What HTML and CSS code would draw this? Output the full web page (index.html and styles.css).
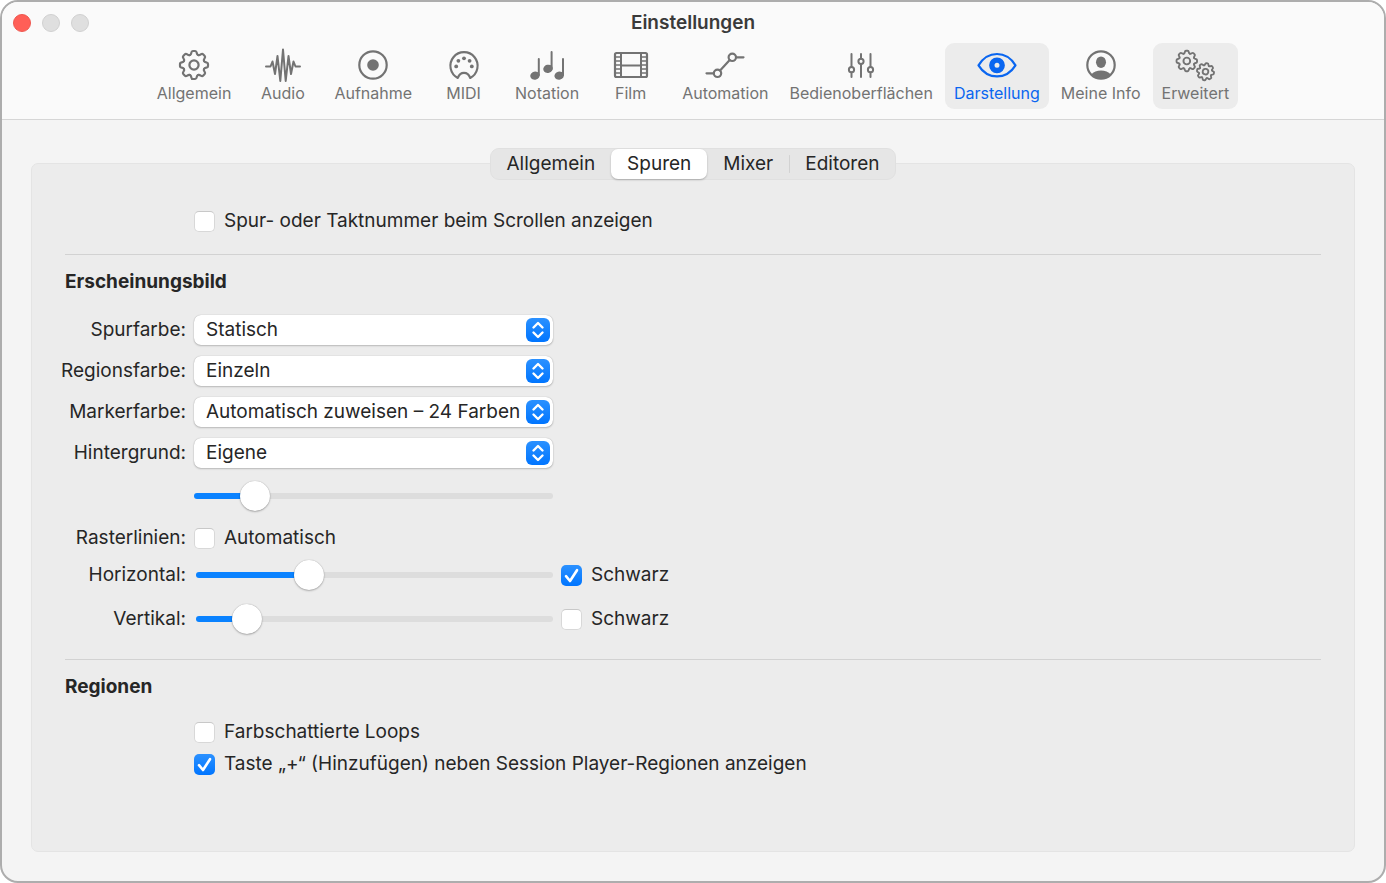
FILE: index.html
```html
<!DOCTYPE html>
<html lang="de">
<head>
<meta charset="utf-8">
<title>Einstellungen</title>
<link rel="stylesheet" href="styles.css">
</head>
<body>
<div class="window">
  <header class="header">
    <div class="titlebar">
      <div class="lights">
        <button class="light light-close" aria-label="Schließen"></button>
        <button class="light" aria-label="Minimieren"></button>
        <button class="light" aria-label="Zoomen"></button>
      </div>
      <h1 class="title">Einstellungen</h1>
    </div>
    <nav class="toolbar">
      <button class="tool">
        <svg class="icon" viewBox="-21 -18 42 36">
          <defs>
            <g id="gear">
              <path id="tooth" d="M-4.13-9.98C-3.3-10.3-2.9-10.9-2.7-12.2Q-2.4-14-1.2-14H1.2Q2.4-14 2.7-12.2C2.9-10.9 3.3-10.3 4.13-9.98"/>
              <use href="#tooth" transform="rotate(45)"/>
              <use href="#tooth" transform="rotate(90)"/>
              <use href="#tooth" transform="rotate(135)"/>
              <use href="#tooth" transform="rotate(180)"/>
              <use href="#tooth" transform="rotate(225)"/>
              <use href="#tooth" transform="rotate(270)"/>
              <use href="#tooth" transform="rotate(315)"/>
              <circle r="4.6"/>
            </g>
          </defs>
          <use href="#gear"/>
        </svg>
        <span>Allgemein</span>
      </button>
      <button class="tool">
        <svg class="icon" viewBox="-21 -18 42 36"><path class="thin" d="M-17 1.5H-12.5L-10.5-3.5L-8 9L-5.5-9L-2.7 16L0-15.5L2.7 16L5.5-9L8 9L10.5-3.5L12.5 1.5H17"/></svg>
        <span>Audio</span>
      </button>
      <button class="tool">
        <svg class="icon" viewBox="-21 -18 42 36"><circle r="13.7"/><circle class="solid" r="5.8"/></svg>
        <span>Aufnahme</span>
      </button>
      <button class="tool">
        <svg class="icon" viewBox="-21 -18 42 36"><path d="M-6.2 12.9A13.6 13.6 0 1 1 6.2 12.9C5 9.5 3 7.8 0 7.8S-5 9.5-6.2 12.9Z"/><g class="solid"><circle cx="-7.8" cy="1.4" r="1.9"/><circle cx="-5.6" cy="-4.2" r="1.9"/><circle cy="-6.7" r="1.9"/><circle cx="5.6" cy="-4.2" r="1.9"/><circle cx="7.8" cy="1.4" r="1.9"/></g></svg>
        <span>MIDI</span>
      </button>
      <button class="tool">
        <svg class="icon" viewBox="-21 -18 42 36"><path class="thin" d="M-8.2 10V-6M4.6 4V-13M16 10V-6"/><g class="solid"><ellipse cx="-12" cy="10.6" rx="4.8" ry="4.1" transform="rotate(-15 -12 10.6)"/><ellipse cx="1" cy="3.8" rx="4.8" ry="4.1" transform="rotate(-15 1 3.8)"/><ellipse cx="12.2" cy="10.6" rx="4.8" ry="4.1" transform="rotate(-15 12.2 10.6)"/></g></svg>
        <span>Notation</span>
      </button>
      <button class="tool">
        <svg class="icon" viewBox="-21 -18 42 36"><rect x="-16" y="-12" width="32" height="24" rx="1.5"/><path class="thin" d="M-10-12V12M10-12V12M-10 0.5H10"/><path class="hair" d="M-16-8H-10M-16-4H-10M-16 0H-10M-16 4H-10M-16 8H-10M10-8H16M10-4H16M10 0H16M10 4H16M10 8H16"/></svg>
        <span>Film</span>
      </button>
      <button class="tool">
        <svg class="icon" viewBox="-21 -18 42 36"><circle cx="-7.5" cy="8.3" r="3.7"/><circle cx="7.3" cy="-7.7" r="3.7"/><path d="M-18.5 8.3H-11.5M-4.9 5.5L4.7-4.9M11.2-7.7H18.5"/></svg>
        <span>Automation</span>
      </button>
      <button class="tool">
        <svg class="icon" viewBox="-21 -18 42 36"><g class="thin"><circle cx="-9.5" cy="4.7" r="2.6"/><circle cy="-3.7" r="2.6"/><circle cx="9.5" cy="4.7" r="2.6"/><path d="M-9.5-11V2M-9.5 7.4V12M0-11V-6.4M0-1V12M9.5-11V2M9.5 7.4V12"/></g></svg>
        <span>Bedienoberflächen</span>
      </button>
      <button class="tool tool-active" aria-current="page">
        <svg class="icon" viewBox="-21 -18 42 36"><path d="M-18.5 0.3C-14-7-7.5-11-0-11S14-7 18.5 0.3C14 7.5 7.5 11.4 0 11.4S-14 7.5-18.5 0.3Z"/><circle class="iris" cy="0.3" r="5.2"/></svg>
        <span>Darstellung</span>
      </button>
      <button class="tool">
        <svg class="icon" viewBox="-21 -18 42 36"><circle r="13.7"/><ellipse class="solid" cy="-2.8" rx="5" ry="5.8"/><path class="solid" d="M-9.8 9.6C-7.5 6.5-4 5.4 0 5.4S7.5 6.5 9.8 9.6A13.7 13.7 0 0 1-9.8 9.6Z"/></svg>
        <span>Meine Info</span>
      </button>
      <button class="tool tool-shaded">
        <svg class="icon" viewBox="-21 -18 42 36"><use class="gear-large" href="#gear" transform="translate(-8.2 -4) scale(.73)"/><use class="gear-small" href="#gear" transform="translate(10.5 6.7) rotate(10) scale(.61)"/></svg>
        <span>Erweitert</span>
      </button>
    </nav>
  </header>

  <main class="content">
    <div class="tabs" role="tablist">
      <button class="tab" role="tab">Allgemein</button>
      <button class="tab tab-active" role="tab" aria-selected="true">Spuren</button>
      <button class="tab" role="tab">Mixer</button>
      <button class="tab tab-divided" role="tab">Editoren</button>
    </div>

    <div class="panel">
      <div class="row">
        <label class="check"><input class="box" type="checkbox">Spur- oder Taktnummer beim Scrollen anzeigen</label>
      </div>

      <section class="section">
        <h2 class="heading">Erscheinungsbild</h2>
        <div class="selects">
          <div class="row">
            <label class="label" for="track">Spurfarbe:</label>
            <div class="popup"><select class="select" id="track"><option>Statisch</option></select><svg class="arrows" viewBox="0 0 24 24"><path d="M7.5 9.5L12 5L16.5 9.5M7.5 14.5L12 19L16.5 14.5"/></svg></div>
          </div>
          <div class="row">
            <label class="label" for="region">Regionsfarbe:</label>
            <div class="popup"><select class="select" id="region"><option>Einzeln</option></select><svg class="arrows" viewBox="0 0 24 24"><path d="M7.5 9.5L12 5L16.5 9.5M7.5 14.5L12 19L16.5 14.5"/></svg></div>
          </div>
          <div class="row">
            <label class="label" for="marker">Markerfarbe:</label>
            <div class="popup"><select class="select" id="marker"><option>Automatisch zuweisen – 24 Farben</option></select><svg class="arrows" viewBox="0 0 24 24"><path d="M7.5 9.5L12 5L16.5 9.5M7.5 14.5L12 19L16.5 14.5"/></svg></div>
          </div>
          <div class="row">
            <label class="label" for="background">Hintergrund:</label>
            <div class="popup"><select class="select" id="background"><option>Eigene</option></select><svg class="arrows" viewBox="0 0 24 24"><path d="M7.5 9.5L12 5L16.5 9.5M7.5 14.5L12 19L16.5 14.5"/></svg></div>
          </div>
        </div>
        <div class="sliders">
          <div class="row">
            <input class="slider" type="range" value="14" style="--value: 14" aria-label="Helligkeit des Hintergrunds">
          </div>
          <div class="row row-auto">
            <label class="label" for="grid-auto">Rasterlinien:</label>
            <label class="check"><input class="box" id="grid-auto" type="checkbox">Automatisch</label>
          </div>
          <div class="row row-grid">
            <label class="label" for="horizontal">Horizontal:</label>
            <input class="slider" id="horizontal" type="range" value="30" style="--value: 30">
            <label class="check"><input class="box" type="checkbox" checked>Schwarz</label>
          </div>
          <div class="row row-grid">
            <label class="label" for="vertical">Vertikal:</label>
            <input class="slider" id="vertical" type="range" value="11" style="--value: 11">
            <label class="check"><input class="box" type="checkbox">Schwarz</label>
          </div>
        </div>
      </section>

      <section class="section">
        <h2 class="heading">Regionen</h2>
        <div class="checks">
          <div class="row"><label class="check"><input class="box" type="checkbox">Farbschattierte Loops</label></div>
          <div class="row"><label class="check"><input class="box" type="checkbox" checked>Taste „+“ (Hinzufügen) neben Session Player-Regionen anzeigen</label></div>
        </div>
      </section>
    </div>
  </main>
</div>
</body>
</html>
```
FILE: styles.css
```css
* { box-sizing: border-box; }

body {
  margin: 0;
  background: #fff;
  color: #262626;
  font: 19px/24px Inter, "Liberation Sans", sans-serif;
}

button, select, input { font: inherit; color: inherit; margin: 0; }
button { border: 0; background: none; padding: 0; }

.window {
  display: flex;
  flex-direction: column;
  min-height: 100vh;
  border: 2px solid #adadad;
  border-radius: 18px;
  background: #f4f4f4;
  overflow: hidden;
}

.header {
  background: #fafafa;
  border-bottom: 1px solid #d6d6d6;
  padding-bottom: 10px;
}

.titlebar {
  display: grid;
  grid-template-columns: 1fr auto 1fr;
  align-items: center;
  height: 41px;
  padding: 0 11px;
}

.lights { display: flex; gap: 11px; }

.light {
  width: 18px;
  height: 18px;
  border-radius: 50%;
  border: 1px solid #d0d0d0;
  background: #dfdfdf;
}

.light-close { background: #ff5f57; border-color: #ee5850; }

.title { margin: 0; font-size: 19px; line-height: 24px; font-weight: 600; color: #3a3a3a; }

.toolbar { display: flex; justify-content: center; gap: 3px; }

.tool {
  display: flex;
  flex-direction: column;
  align-items: center;
  min-width: 79px;
  padding: 4px 9px 6px;
  border-radius: 9px;
  color: #737373;
  font-size: 16px;
  line-height: 20px;
  white-space: nowrap;
}

.tool-active { color: #0a66f0; background: #ececec; }
.tool-shaded { background: #ececec; }

.icon {
  width: 42px;
  height: 36px;
  fill: none;
  stroke: currentColor;
  stroke-width: 2.2;
  stroke-linecap: round;
  stroke-linejoin: round;
}

.thin { stroke-width: 2; }
.hair { stroke-width: 1.6; }
.solid { fill: currentColor; stroke: none; }
.iris { stroke-width: 5.4; }
.gear-large { stroke-width: 2.6; }
.gear-small { stroke-width: 3; }

.content {
  display: flex;
  flex: 1;
  flex-direction: column;
  padding: 28px 29px 29px;
}

.tabs {
  position: relative;
  display: flex;
  align-self: center;
  margin-bottom: -17px;
  border: 1px solid #e0e0e0;
  border-radius: 9px;
  background: #e6e6e6;
}

.tab { height: 30px; padding: 0 16px; border-radius: 7px; }
.tab-active { background: #fff; box-shadow: 0 1px 2px rgba(0, 0, 0, .25); }

.tab-divided {
  background: linear-gradient(#d2d2d2, #d2d2d2) 0 50% / 1px 18px no-repeat;
}

.panel {
  flex: 1;
  padding: 45px 33px;
  border: 1px solid #e4e4e4;
  border-radius: 7px;
  background: #ececec;
}

.row {
  display: grid;
  grid-template-columns: 121px 359px auto;
  column-gap: 8px;
  align-items: center;
  justify-content: start;
}

.label { justify-self: end; white-space: nowrap; }
.check { grid-column: 2; display: flex; align-items: center; gap: 9px; white-space: nowrap; }
.row-grid .check { grid-column: 3; }

.box {
  appearance: none;
  flex: none;
  width: 21px;
  height: 21px;
  border: 1px solid #d8d8d8;
  border-top-color: #c8c8c8;
  border-radius: 5px;
  background: #fff;
}

.box:checked {
  border: 0;
  background:
    url("data:image/svg+xml,%3Csvg xmlns='http://www.w3.org/2000/svg' viewBox='0 0 21 21'%3E%3Cpath d='M5 11.2L9 16L16 5.2' fill='none' stroke='white' stroke-width='2.6' stroke-linecap='round' stroke-linejoin='round'/%3E%3C/svg%3E"),
    linear-gradient(#2b91ff, #0075ff);
}

.section { margin-top: 21px; padding-top: 15px; border-top: 1px solid #d2d2d2; }
.heading { margin: 0 0 21px; font-size: 19px; line-height: 24px; font-weight: 700; }
.selects { display: grid; gap: 11px; }

.popup { display: grid; align-items: center; }
.popup > * { grid-area: 1 / 1; }

.select {
  appearance: none;
  width: 100%;
  height: 30px;
  padding: 0 28px 0 12px;
  border: 0;
  border-radius: 7px;
  background: #fff;
  box-shadow: 0 0 1px rgba(0, 0, 0, .3), 0 1px 2px rgba(0, 0, 0, .2);
}

.arrows {
  justify-self: end;
  width: 24px;
  height: 24px;
  margin-right: 3px;
  border-radius: 6px;
  background: linear-gradient(#2b91ff, #0075ff);
  fill: none;
  stroke: #fff;
  stroke-width: 2.4;
  stroke-linecap: round;
  stroke-linejoin: round;
  pointer-events: none;
}

.sliders { margin: 13px 0 25px; }
.sliders .slider { grid-column: 2; }
.row-auto { margin: 15px 0 10px; }
.row-grid + .row-grid { margin-top: 14px; }
.row-grid .slider { padding-left: 2px; }

.slider {
  appearance: none;
  width: 100%;
  height: 30px;
  background: none;
}

.slider::-webkit-slider-runnable-track {
  height: 6px;
  border-radius: 3px;
  background: linear-gradient(#0a82ff, #0a82ff) 0 0 / calc(15px + (100% - 30px) * var(--value) / 100) 100% no-repeat #dddddd;
}

.slider::-webkit-slider-thumb {
  appearance: none;
  width: 30px;
  height: 30px;
  margin-top: -12px;
  border-radius: 50%;
  background: #fff;
  box-shadow: 0 0 1px rgba(0, 0, 0, .3), 0 1px 2px rgba(0, 0, 0, .25);
}

.checks { display: grid; gap: 8px; }
```
